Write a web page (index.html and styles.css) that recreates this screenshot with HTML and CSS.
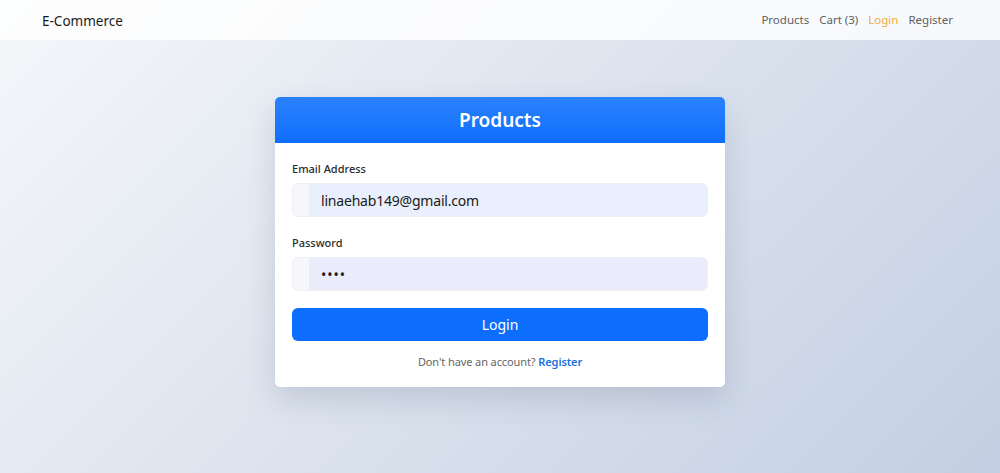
FILE: index.html
```html
<!DOCTYPE html>
<html>
<head>
<meta charset="utf-8" />
<title>E-Commerce - Login</title>
<link rel="stylesheet" href="styles.css">
</head>
<body>
<div class="navbar">
	<a class="brand" href="#">E-Commerce</a>
	<ul class="nav">
		<li><a href="#">Products</a></li>
		<li><a href="#">Cart (3)</a></li>
		<li><a class="active" href="#">Login</a></li>
		<li><a href="#">Register</a></li>
	</ul>
</div>

<div class="main">
	<div class="card">
		<div class="card-head">Products</div>
		<form class="card-body">
			<label class="label" for="email">Email Address</label>
			<input class="field" id="email" type="email" value="linaehab149@gmail.com" />
			<label class="label" for="pass">Password</label>
			<input class="field field-pass" id="pass" type="password" value="1234" />
			<button class="btn" type="button">Login</button>
			<p class="foot">Don't have an account? <a href="#">Register</a></p>
		</form>
	</div>
</div>
</body>
</html>
```

FILE: styles.css
```css
*{ margin:0; padding:0; box-sizing:border-box;}
html,body{ height:100%;}
body{ font-family:"Noto Sans","Open Sans",sans-serif; color:#212529; background:linear-gradient(135deg,#f5f7fa 0%,#c3cfe2 100%);}
a{ text-decoration:none;}

.navbar{ height:40px; display:flex; align-items:center; justify-content:space-between; padding:1px 47px 0 42px; background:rgba(255,255,255,0.82);}
.brand{ color:#1b1b1b; font-size:13.5px; line-height:18px;}
.nav{ display:flex; list-style:none; gap:10px; line-height:18px; margin-bottom:4px;}
.nav a{ color:#5c5f63; font-size:11.5px;}
.nav a.active{ color:#f0ad33;}

.main{ display:flex; justify-content:center; padding-top:57px;}
.card{ width:450px; background:#fff; border-radius:5px; overflow:hidden; box-shadow:0 12px 30px rgba(60,70,100,0.18);}
.card-head{ height:46px; display:flex; align-items:center; justify-content:center; padding-bottom:1px; color:#fff; font-size:19px; font-weight:600; background:linear-gradient(180deg,#2a82fb 0%,#0f6efd 100%);}
.card-body{ display:flex; flex-direction:column; padding:18px 17px 17px;}
.label{ display:block; font-size:11px; line-height:16px; font-weight:500; color:#2b2b2b; margin-bottom:6px;}
.field{ height:34px; border:1px solid #eef0f4; border-radius:6px; padding-left:28px; font-family:inherit; font-size:14px; letter-spacing:-0.2px; color:#1a1a1a; background:linear-gradient(to right,#f6f7fb 16px,#e9effc 16px); margin-bottom:18px; outline:none;}
.field-pass{ background:linear-gradient(to right,#f6f7fb 16px,#eaecfb 16px); font-size:14px; letter-spacing:1px; margin-bottom:17px;}
.btn{ height:33px; border:none; border-radius:6px; background:#0d6efd; color:#fff; font-family:inherit; font-size:14px; cursor:pointer;}
.foot{ text-align:center; font-size:11px; line-height:16px; letter-spacing:-0.1px; color:#666; margin-top:13px;}
.foot a{ color:#1a6fd8; font-weight:600;}
```
